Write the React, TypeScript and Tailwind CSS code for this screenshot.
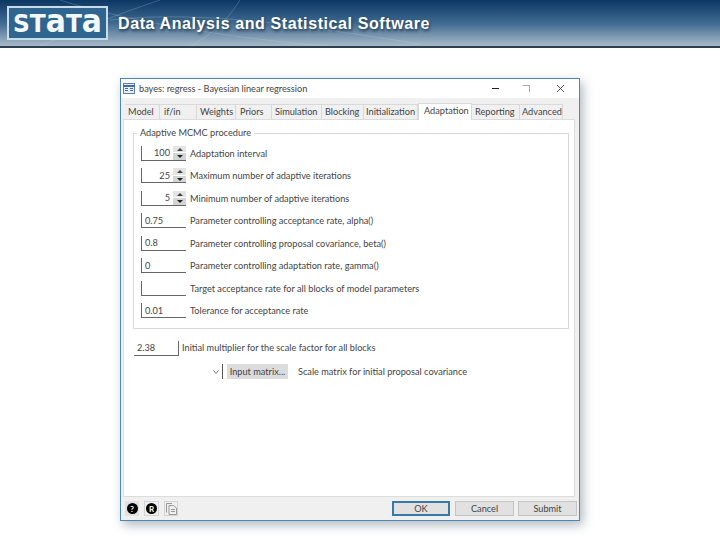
import React from "react";

const tabs: [string, number, number][] = [
  ["Model", 35, 3],
  ["if/in", 37, 4],
  ["Weights", 39, 3],
  ["Priors", 36, 4],
  ["Simulation", 50, 3],
  ["Blocking", 42, 3],
  ["Initialization", 54, 2],
  ["Adaptation", 54, 5],
  ["Reporting", 48, 3],
  ["Advanced", 43, 2],
];

const rows: { v: string; spin?: boolean; label: string }[] = [
  { v: "100", spin: true, label: "Adaptation interval" },
  { v: "25", spin: true, label: "Maximum number of adaptive iterations" },
  { v: "5", spin: true, label: "Minimum number of adaptive iterations" },
  { v: "0.75", label: "Parameter controlling acceptance rate, alpha()" },
  { v: "0.8", label: "Parameter controlling proposal covariance, beta()" },
  { v: "0", label: "Parameter controlling adaptation rate, gamma()" },
  { v: "", label: "Target acceptance rate for all blocks of model parameters" },
  { v: "0.01", label: "Tolerance for acceptance rate" },
];

function Spinner() {
  return (
    <div className="flex flex-col w-[13px] h-[14px] gap-px shrink-0">
      <div className="flex-1 bg-[#e4e4e4] flex items-center justify-center">
        <svg width="6" height="3" viewBox="0 0 6 3"><path d="M3 0 6 3H0Z" fill="#444" /></svg>
      </div>
      <div className="flex-1 bg-[#d4d4d4] flex items-center justify-center">
        <svg width="6" height="3" viewBox="0 0 6 3"><path d="M0 0H6L3 3Z" fill="#222" /></svg>
      </div>
    </div>
  );
}

function Header() {
  return (
    <div className="relative h-[48px] shrink-0 border-b-2 border-[#2c3f52] bg-gradient-to-b from-[#0b3763] via-[#3f6a90] to-[#a9bac8] flex items-center overflow-hidden">
      <svg className="absolute inset-0" width="720" height="46" viewBox="0 0 720 46" fill="none">
        <path d="M40 46C90 25 130 10 160 0M60 0C120 20 240 40 330 46M190 46C220 30 230 15 240 0M110 20C200 10 300 25 420 44" stroke="#c4d4e0" strokeOpacity="0.35" strokeWidth="0.7" />
      </svg>
      <div className="relative ml-[7px] w-[101px] h-[34px] border-2 border-[#c9dbe6] bg-[#2f6690] shrink-0 flex items-center justify-center">
        <svg width="97" height="30" viewBox="0 0 97 30" className="overflow-visible">
          <text x="4" y="24" textLength="89" lengthAdjust="spacingAndGlyphs" fill="#f4f8fa" fontSize="25" fontWeight="700" fontFamily="'DejaVu Sans', sans-serif">
            ST<tspan fontSize="32">a</tspan>T<tspan fontSize="32">a</tspan>
          </text>
        </svg>
      </div>
      <div className="relative ml-[10px] mt-[2px] text-white font-bold text-[16px] tracking-[0.6px] font-['Liberation_Sans',sans-serif] [text-shadow:1px_2px_3px_rgba(20,40,60,0.8)]">
        Data Analysis and Statistical Software
      </div>
    </div>
  );
}

function Field({ v, spin, className }: { v: string; spin?: boolean; className?: string }) {
  return (
    <div className={"w-[45px] h-[15px] border-b border-[#666] flex items-center shrink-0 " + (className ?? "")}>
      {spin ? (
        <>
          <span className="flex-1 text-right pr-[3px]">{v}</span>
          <Spinner />
        </>
      ) : (
        <span className="pl-[3px]">{v}</span>
      )}
    </div>
  );
}

function Dialog() {
  return (
    <div className="ml-[120px] mt-[30px] w-[460px] h-[443px] border border-[#4a87b5] bg-[#f0f0f0] shadow-[3px_4px_10px_rgba(60,80,100,0.4)] flex flex-col text-[#444] text-[9.2px] leading-none font-['Lato',sans-serif]">
      <div className="h-[19px] shrink-0 bg-white flex items-center pl-[2px]">
        <svg width="12" height="11" viewBox="0 0 12 11" fill="none" className="shrink-0">
          <rect x="0.5" y="0.5" width="11" height="10" fill="#e8eef5" stroke="#5a7fa8" />
          <path d="M0 3H12" stroke="#3b6ea5" strokeWidth="2" />
          <path d="M2 5.5H5M2 7.5H5M7 5.5H10M7 7.5H10" stroke="#4c6b8f" />
        </svg>
        <span className="ml-[4px]">bayes: regress - Bayesian linear regression</span>
        <div className="ml-auto flex items-center h-full">
          <div className="w-[7px] h-px bg-[#222] mr-[24px]" />
          <div className="w-[7px] h-[7px] border-t border-r border-[#aaa] mr-[26px]" />
          <svg width="9" height="9" viewBox="0 0 9 9" className="mr-[14px]"><path d="M1 1 8 8M8 1 1 8" stroke="#444" strokeWidth="0.9" /></svg>
        </div>
      </div>

      <div className="h-[21px] shrink-0 flex items-end pl-[4px]">
        {tabs.map(([t, w, p]) => {
          const active = t === "Adaptation";
          return (
            <div
              key={t}
              style={{ width: w, paddingLeft: p }}
              className={
                "flex items-center whitespace-nowrap border-t border-r border-[#d9d9d9] " +
                (active ? "h-[17px] mb-[-1px] z-10 bg-white border-l pb-[2px]" : "h-[15px] bg-[#f0f0f0] pb-[1px]")
              }
            >
              {t}
            </div>
          );
        })}
      </div>

      <div className="flex-1 ml-[2px] mr-[4px] bg-white border border-[#dcdcdc] pl-[9px] pt-[13px]">
        <div className="relative w-[436px] h-[196px] border border-[#d8d8d8] pl-[7px] pt-[8px]">
          <div className="absolute left-[3px] top-[-6px] bg-white px-[3px]">Adaptive MCMC procedure</div>
          {rows.map((r) => (
            <div key={r.label} className="h-[22.5px] flex items-center gap-[4px]">
              <Field v={r.v} spin={r.spin} className="border-l" />
              <span>{r.label}</span>
            </div>
          ))}
        </div>
        <div className="mt-[12px] flex items-center gap-[3px]">
          <Field v="2.38" className="border-r ml-[1px]" />
          <span className="mb-[1px]">Initial multiplier for the scale factor for all blocks</span>
        </div>
        <div className="mt-[8px] flex items-center h-[15px] ml-[80px]">
          <svg width="6" height="4" viewBox="0 0 6 4" fill="none" className="mr-[3px]"><path d="M0.5 0.5 3 3.5 5.5 0.5" stroke="#777" /></svg>
          <div className="w-px h-[15px] bg-[#555] mr-[4px]" />
          <div className="w-[61px] h-[15px] bg-[#dcdcdc] flex items-center justify-center whitespace-nowrap">Input matrix...</div>
          <span className="ml-[10px]">Scale matrix for initial proposal covariance</span>
        </div>
      </div>

      <div className="h-[23px] shrink-0 flex items-center pl-[4px] pr-[2px]">
        <div className="w-[14px] h-[15px] bg-[#e2e2e2] flex items-center justify-center">
          <span className="w-[11px] h-[11px] rounded-full bg-black text-white font-bold text-[8px] flex items-center justify-center">?</span>
        </div>
        <div className="ml-[5px] w-[15px] h-[15px] border border-[#d4d4d4] flex items-center justify-center">
          <span className="w-[11px] h-[11px] rounded-full bg-black text-white font-bold text-[8px] flex items-center justify-center">R</span>
        </div>
        <div className="ml-[5px] w-[14px] h-[15px] border border-[#d4d4d4] flex items-center justify-center">
          <svg width="11" height="12" viewBox="0 0 11 12" fill="none" stroke="#999">
            <path d="M.5 9.5V.5H6M3 11.5V2.5H7.5L10.5 5V11.5Z" />
            <path d="M5 6.5H9M5 8.5H9" />
          </svg>
        </div>
        <div className="ml-auto flex items-center">
          <div className="w-[58px] h-[15px] border-2 border-[#3a78a8] bg-[#e1e1e1] flex items-center justify-center">OK</div>
          <div className="ml-[5px] w-[59px] h-[15px] border border-[#c4c4c4] bg-[#e1e1e1] flex items-center justify-center">Cancel</div>
          <div className="ml-[4px] w-[59px] h-[15px] border border-[#c4c4c4] bg-[#e1e1e1] flex items-center justify-center">Submit</div>
        </div>
      </div>
    </div>
  );
}

export default function App() {
  return (
    <div className="w-[720px] h-[540px] bg-white flex flex-col overflow-hidden">
      <Header />
      <Dialog />
    </div>
  );
}
